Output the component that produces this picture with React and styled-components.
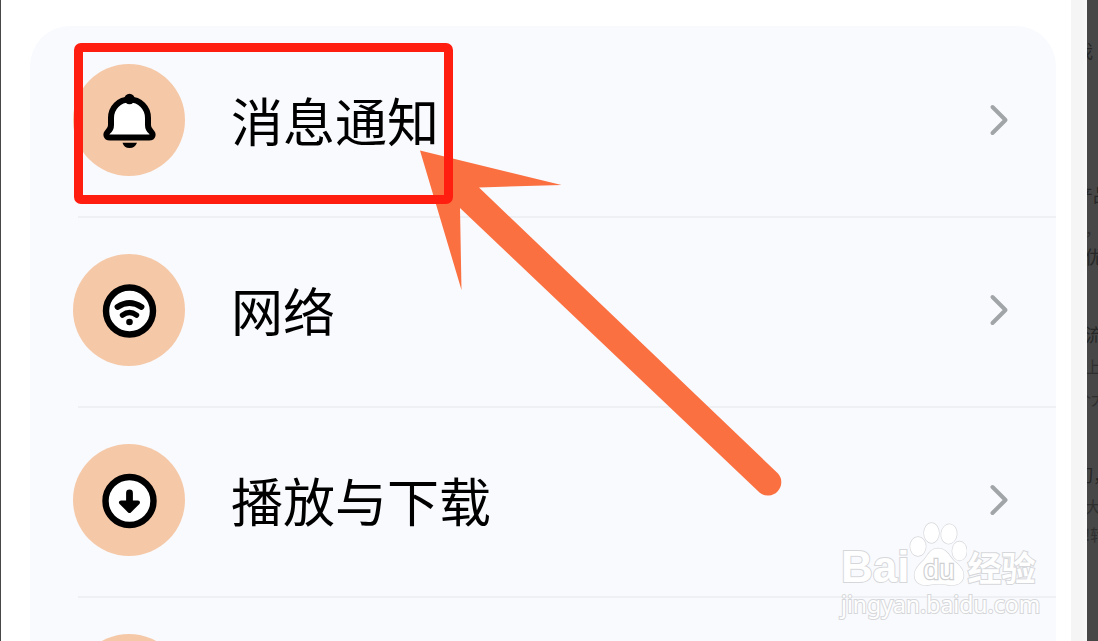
import React from "react";
import styled, { createGlobalStyle } from "styled-components";

const GlobalStyle = createGlobalStyle`
  * { box-sizing: border-box; }
  body {
    margin: 0;
    background: #474747;
    font-family: "Noto Sans", "Noto Sans CJK SC", sans-serif;
  }
`;

const Page = styled.div`
  display: flex;
  height: 100vh;
  overflow: hidden;
  padding-left: 1px;
`;

const Screen = styled.main`
  position: relative;
  flex: 1;
  min-width: 0;
  padding: 26px 15px 0 29px;
  background: #fff;
`;

const Gutter = styled.div`
  width: 16px;
  background: linear-gradient(90deg, #f5f5f5 70%, #f9f9f9);
`;

const Backdrop = styled.aside`
  width: 11px;
  overflow: hidden;
  background: #474747;
  color: #262626;
  white-space: nowrap;
`;

const BackdropLine = styled.p`
  margin: ${(p) => p.$gap}px 0 0;
  font-family: "Noto Sans CJK SC", sans-serif;
  font-size: ${(p) => (p.$large ? 18 : 16)}px;
  line-height: 20px;
  text-indent: ${(p) => (p.$cut ? -12 : -2)}px;
  opacity: ${(p) => (p.$large ? 1 : 0.7)};
`;

const SettingsList = styled.ul`
  margin: 0;
  padding: 2px 0 0;
  min-height: 100vh;
  list-style: none;
  border-radius: 40px 40px 0 0;
  background: #f9fafe;
`;

const Row = styled.a`
  display: flex;
  align-items: center;
  height: 188px;
  padding: 0 45px 4px 43px;
  color: #000;
  text-decoration: none;
`;

const Divider = styled.div`
  height: 2px;
  margin-left: 48px;
  background: #eef0f4;
`;

const IconCircle = styled.span`
  display: grid;
  place-items: center;
  width: 112px;
  height: 112px;
  border-radius: 50%;
  background: #f5c8a7;
`;

const Label = styled.span`
  flex: 1;
  margin-left: 46px;
  font-family: "Noto Sans CJK SC", sans-serif;
  font-size: 52px;
  line-height: 76px;
`;

const Highlight = styled.div`
  position: absolute;
  top: 43px;
  left: 73px;
  width: 379px;
  height: 161px;
  border: 9px solid #ff1e10;
  border-radius: 7px;
`;

const Pointer = styled.svg`
  position: absolute;
  top: 150px;
  left: 419px;
`;

const Watermark = styled.div`
  position: absolute;
  right: 32px;
  bottom: 24px;
  width: 198px;
  color: #fff;
  white-space: nowrap;
  -webkit-text-stroke: 2px #d6d7da;
  paint-order: stroke fill;
`;

const Brand = styled.div`
  display: flex;
  align-items: flex-end;
  height: 68px;
`;

const BrandLatin = styled.span`
  font-family: "Liberation Sans", sans-serif;
  font-size: 44px;
  font-weight: 700;
  line-height: 48px;
`;

const BrandChinese = styled.span`
  font-family: "Noto Sans CJK SC", sans-serif;
  font-size: 34px;
  font-weight: 700;
  line-height: 48px;
`;

const Paw = styled.svg`
  flex: none;
  margin-bottom: 5px;
`;

const Address = styled.div`
  font-family: "Noto Sans", sans-serif;
  font-size: 23px;
  line-height: 26px;
`;

const BellIcon = () => (
  <svg width="60" height="60" viewBox="-30 -30 60 60" aria-hidden="true">
    <path
      d="M.5-20.500C-10-20.500-18-12.500-18-2V5Q-18 9-21 11.500Q-23 13.500-22.500 15.500Q-22 17.500-19 17.500H20Q23 17.500 23.500 15.500Q24 13.500 22 11.500Q19 9 19 5V-2C19-12.500 11-20.500.5-20.500Z"
      fill="#fff" stroke="#000" strokeWidth="6" strokeLinejoin="round"
    />
    <circle cx=".5" cy="-21" r="5.200" />
    <path d="M-6.500 22.800H8Q6 28 .5 28T-6.500 22.800Z" />
  </svg>
);

const WifiIcon = () => (
  <svg width="60" height="60" viewBox="-30 -30 60 60" aria-hidden="true">
    <circle cx=".5" cy="1" r="23.500" fill="#fff" stroke="#000" strokeWidth="6.400" />
    <g fill="none" stroke="#000" strokeLinecap="round">
      <path d="M-11.500-3Q.5-11 12.500-3" strokeWidth="5.800" />
      <path d="M-6.500 5.200Q.5 0 7.500 5.200" strokeWidth="5.400" />
    </g>
    <circle cx=".5" cy="12" r="3.300" />
  </svg>
);

const DownloadIcon = () => (
  <svg width="60" height="60" viewBox="-30 -30 60 60" aria-hidden="true">
    <circle cx=".5" cy="1" r="24" fill="#fff" stroke="#000" strokeWidth="6.400" />
    <path d="M.5-7V4" stroke="#000" strokeWidth="6.800" strokeLinecap="round" />
    <path d="M-8 2.500H9L.5 11Z" stroke="#000" strokeWidth="4" strokeLinejoin="round" />
  </svg>
);

const Chevron = () => (
  <svg width="24" height="36" viewBox="0 0 24 36" fill="none" aria-hidden="true">
    <path d="M5.500 5L18.500 18L5.500 31" stroke="#a2a5a8" strokeWidth="4" strokeLinecap="round" strokeLinejoin="round" />
  </svg>
);

const items = [
  { label: "消息通知", Icon: BellIcon },
  { label: "网络", Icon: WifiIcon },
  { label: "播放与下载", Icon: DownloadIcon },
  { label: "", Icon: null },
];

const backdropLines = [
  { text: "我", gap: 40, cut: true, large: true },
  { text: "产品", gap: 124, cut: true, large: true },
  { text: "，", gap: 14 },
  { text: "优", gap: 8, large: true },
  { text: "流", gap: 58, large: true },
  { text: "上", gap: 12 },
  { text: "个大", gap: 12, cut: true },
  { text: "切，", gap: 56, cut: true, large: true },
  { text: "大", gap: 12 },
  { text: "!转", gap: 8 },
];

export default function App() {
  return (
    <>
      <GlobalStyle />
      <Page>
        <Screen>
          <SettingsList>
            {items.map(({ label, Icon }, i) => (
              <li key={i}>
                <Row href="#" aria-label={label || "更多"}>
                  <IconCircle>{Icon && <Icon />}</IconCircle>
                  <Label>{label}</Label>
                  <Chevron />
                </Row>
                <Divider />
              </li>
            ))}
          </SettingsList>
          <Pointer width="364" height="348" viewBox="420 150 364 348" aria-hidden="true">
            <path
              d="M420 150.500L561.500 185L479 187.500L778 473.500A13.300 13.300 0 0 1 759.500 492.500L460 208L461.500 290Z"
              fill="#fb7040"
            />
          </Pointer>
          <Highlight />
          <Watermark>
            <Brand>
              <BrandLatin>Bai</BrandLatin>
              <Paw width="58" height="64" viewBox="908 523 58 64" fill="#fff" stroke="#d6d7da" strokeWidth="1.300">
                <ellipse cx="917" cy="547.500" rx="7.800" ry="9.500" />
                <ellipse cx="930.500" cy="534" rx="7.500" ry="10" />
                <ellipse cx="948" cy="535" rx="7.800" ry="9.800" transform="rotate(8 948 535)" />
                <ellipse cx="958.500" cy="552" rx="7.300" ry="9.500" />
                <path d="M937 549.500C946 549.500 948 557 953 562C959 567 963 571 962.500 577C962 584 956 587 948 586C941 584.500 933 584.500 927 586C919 587 913.500 583 913.500 576C913.500 570 918 566 923 561C927 556 929 549.500 937 549.500Z" />
                <text x="938" y="580" textAnchor="middle" fontFamily="Liberation Sans, sans-serif" fontSize="28" fill="#fff" stroke="#cfd0d3" strokeWidth="2.500">
                  du
                </text>
              </Paw>
              <BrandChinese>经验</BrandChinese>
            </Brand>
            <Address>jingyan.baidu.com</Address>
          </Watermark>
        </Screen>
        <Gutter />
        <Backdrop aria-hidden="true">
          {backdropLines.map((line, i) => (
            <BackdropLine key={i} $gap={line.gap} $cut={line.cut} $large={line.large}>
              {line.text}
            </BackdropLine>
          ))}
        </Backdrop>
      </Page>
    </>
  );
}
